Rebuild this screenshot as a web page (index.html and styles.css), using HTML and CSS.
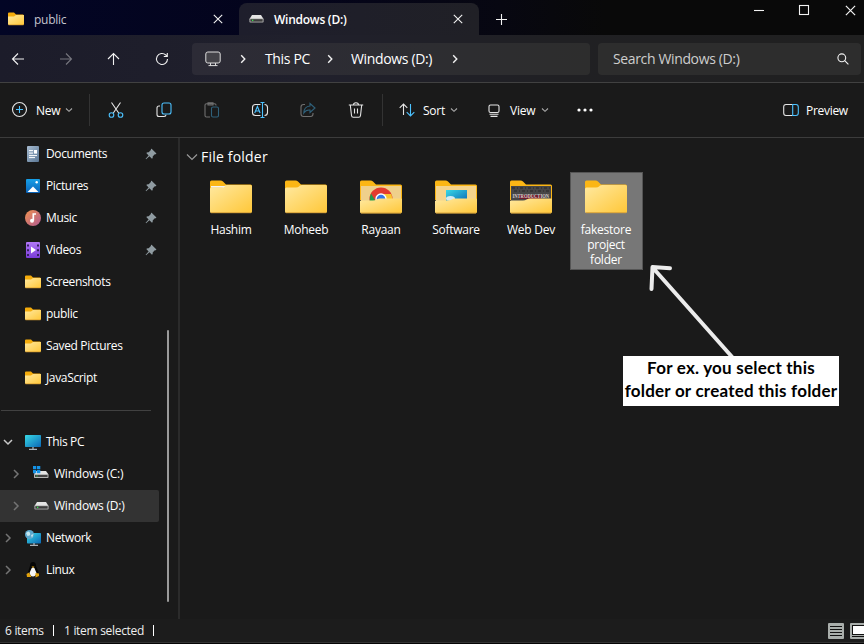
FILE: index.html
```html
<!DOCTYPE html>
<html lang="en">
<head>
<meta charset="utf-8">
<title>Windows (D:)</title>
<link rel="stylesheet" href="styles.css">
</head>
<body>
<svg class="defs" width="0" height="0" aria-hidden="true">
  <defs>
    <linearGradient id="gold" x1="0" y1="0" x2="1" y2="1"><stop offset="0" stop-color="#ffe9a0"/><stop offset="1" stop-color="#ffc738"/></linearGradient>
    <linearGradient id="screen" x1="0" y1="0" x2="1" y2="1"><stop offset="0" stop-color="#38d9e6"/><stop offset="1" stop-color="#0b67b5"/></linearGradient>
    <linearGradient id="paper" x1="0" y1="0" x2="1" y2="1"><stop offset="0" stop-color="#a8bdd2"/><stop offset="1" stop-color="#5a7694"/></linearGradient>
    <linearGradient id="photo" x1="0" y1="0" x2="0" y2="1"><stop offset="0" stop-color="#16a0e8"/><stop offset="1" stop-color="#0a62b8"/></linearGradient>
    <linearGradient id="tune" x1="0" y1="0" x2="1" y2="1"><stop offset="0" stop-color="#f0924f"/><stop offset="1" stop-color="#b05a92"/></linearGradient>
    <linearGradient id="film" x1="0" y1="0" x2="0" y2="1"><stop offset="0" stop-color="#b278f8"/><stop offset="1" stop-color="#7a3bd8"/></linearGradient>
    <symbol id="folder-s" viewBox="0 0 16 14"><path d="M0 1.500Q0 .5 1 .5H6L8 2.500H15.300V8H0Z" fill="#f5ac0b"/><path d="M0 4.500H6L8 3H16V12Q16 13 15 13H1Q0 13 0 12Z" fill="url(#gold)"/><path d="M.5 12.800H15.500" stroke="#dca031" stroke-width=".8"/></symbol>
    <symbol id="drive" viewBox="0 0 15 10"><path d="M3 1H12L14.500 5H.5Z" fill="#e4e4e4"/><rect x=".4" y="4.400" width="14.200" height="4.200" rx=".8" fill="#a9a9a9"/><rect x="1.400" y="5.200" width="12.200" height="2.400" fill="#3d3d3d"/><rect x="3" y="5.700" width="1.300" height="1.300" fill="#37e04c"/></symbol>
    <symbol id="close" viewBox="0 0 10 10"><path d="M.8.8 9.200 9.200M9.200.8.8 9.200" /></symbol>
    <symbol id="right" viewBox="0 0 6 10"><path d="M1.200 1.300 4.800 5 1.200 8.700"/></symbol>
    <symbol id="down" viewBox="0 0 8 6"><path d="M1 1.500 4 4.300 7 1.500"/></symbol>
    <symbol id="pin" viewBox="0 0 12 12"><path d="M6.600.8 11.200 5.200Q11.600 6 10.600 6.200L9.800 6.200 7.700 8.400Q8 10 7 10.800L4.400 8.300 1.100 11.200.6 10.800 3.600 7.500 1.300 5Q2 4 3.700 4.300L5.900 2.100V1.300Q6 .5 6.600.8Z" fill="#8f9ba1"/></symbol>
    <symbol id="folder-l" viewBox="0 0 42 34"><path d="M0 2Q0 .5 1.500 .5H10.500Q12 .5 13 1.500L16 4.500H40.500Q42 4.500 42 6V20H0Z" fill="#fbb615"/></symbol>
    <symbol id="front-l" viewBox="0 0 42 34"><path d="M0 9Q0 7.500 1.500 7.500H11Q13 7.500 14 6.500L15 5.500Q16 5 17 5H40.500Q42 5 42 6.500V31.500Q42 33 40.500 33H1.500Q0 33 0 31.500Z" fill="url(#gold)"/><path d="M1 32.700H41" stroke="#d8a23a"/></symbol>
    <symbol id="pocket-l" viewBox="0 0 42 34"><path d="M0 21Q0 20.500 1 20.500H13Q15 20.500 17 19.300Q18 18.500 20 18.500H41Q42 18.500 42 19.500V31.800Q42 33.300 40.500 33.300H1.500Q0 33.300 0 31.800Z" fill="url(#gold)"/><path d="M1 33H41" stroke="#d8a23a"/></symbol>
  </defs>
</svg>
<div class="window">
  <header class="chrome">
    <div class="tabs">
      <div class="tab first"><svg class="tab-folder"><use href="#folder-s"/></svg><span class="tab-title">public</span><svg class="line x"><use href="#close"/></svg></div>
      <div class="tab active"><svg class="tab-drive"><use href="#drive"/></svg><span class="tab-title">Windows (D:)</span><svg class="line x"><use href="#close"/></svg></div>
      <svg class="line plus" viewBox="0 0 11 11"><path d="M5.500 0V11M0 5.500H11"/></svg>
      <div class="controls">
        <svg class="line" viewBox="0 0 11 11"><path d="M1 5.500H11"/></svg>
        <svg class="line" viewBox="0 0 11 11"><rect x=".5" y=".5" width="9" height="9"/></svg>
        <svg class="line"><use href="#close"/></svg>
      </div>
    </div>
    <div class="nav">
      <div class="arrows">
        <svg class="line" viewBox="0 0 14 14"><path d="M13 7H1.500M7 1.500 1.500 7 7 12.500"/></svg>
        <svg class="line off" viewBox="0 0 14 14"><path d="M1 7H12.500M7 1.500 12.500 7 7 12.500"/></svg>
        <svg class="line" viewBox="0 0 14 14"><path d="M6.500 13V1.500M1 7 6.500 1.500 12 7"/></svg>
        <svg class="line" viewBox="0 0 14 14"><path d="M12.500 7A5.500 5.500 0 1 1 10.800 3L12 4.300M12.300 1V4.500H8.800"/></svg>
      </div>
      <div class="address">
        <svg class="pc" viewBox="0 0 16 16"><rect x=".8" y="1" width="14.400" height="11" rx="2" fill="#444349"/><path d="M5.500 12V14.500M10.500 12V14.500M3.500 14.600H12.500"/></svg>
        <svg class="line chev"><use href="#right"/></svg>
        <span class="crumb c1">This PC</span>
        <svg class="line chev"><use href="#right"/></svg>
        <span class="crumb c2">Windows (D:)</span>
        <svg class="line chev"><use href="#right"/></svg>
      </div>
      <div class="search"><span>Search Windows (D:)</span><svg class="line" viewBox="0 0 12 12"><circle cx="4.800" cy="4.800" r="3.900"/><path d="M7.700 7.700 11.400 11.400"/></svg></div>
    </div>
  </header>
  <div class="toolbar">
    <div class="tool new"><svg class="i16" viewBox="0 0 16 16"><circle cx="8.500" cy="7.500" r="7"/><path class="blue" d="M8.500 4V11M5 7.500H12"/></svg><span>New</span><svg class="small"><use href="#down"/></svg></div>
    <div class="icons">
      <svg class="i16" viewBox="0 0 16 16"><path d="M3.500.5 10.700 11M12.500.5 5.300 11"/><g class="blue"><circle cx="3.500" cy="13" r="2.300"/><circle cx="12.500" cy="13" r="2.300"/></g></svg>
      <svg class="i16" viewBox="0 0 16 16"><path d="M4 4H3Q1 4 1 6V12.500Q1 14.500 3 14.500H8Q10 14.500 10 12.800"/><rect class="blue" x="6" y="1" width="9" height="11" rx="2"/></svg>
      <svg class="i16 off" viewBox="0 0 16 16"><path d="M6 15H2.500Q1 15 1 13.500V3Q1 1.700 2.500 1.700H10.500Q12 1.700 12 3V3.500M4 .7H9V3H4Z"/><rect class="blue" x="7.500" y="5" width="7" height="10" rx="1.500"/></svg>
      <svg class="i17" viewBox="0 0 17 16"><path d="M8.500 2.500H3.500Q.5 2.500.5 5.500V10.500Q.5 13.500 3.500 13.500H8.500M12.500 2.500Q15.500 2.500 15.500 5.500V10.500Q15.500 13.500 12.500 13.500"/><path class="blue" d="M10.500.5V15.500M8.500.5H12.500M8.500 15.500H12.500M2.700 11 5.400 4.500 8.100 11M3.500 9H7.200"/></svg>
      <svg class="i16 off" viewBox="0 0 16 16"><path d="M5 2.500H3.500Q1 2.500 1 5V12Q1 14.500 3.500 14.500H10.500Q13 14.500 13 12V11"/><path class="blue" d="M10 1.500 15 6 10 10.500V8Q6 7.500 3.800 11Q4 4.500 10 4Z"/></svg>
      <svg class="i16" viewBox="0 0 16 16"><path d="M.8 3H15.200M5.500 3Q5.500.7 8 .7T10.500 3M2.300 3 3.500 13.500Q3.700 15.200 5.300 15.200H10.700Q12.300 15.200 12.500 13.500L13.700 3M6.500 6.500V11.500M9.500 6.500V11.500"/></svg>
    </div>
    <div class="tool sort"><svg class="i16" viewBox="0 0 16 16"><path d="M4.500 13V2M.7 5.800 4.500 2 8.300 5.800"/><path class="blue" d="M11.500 2V14M7.700 10.200 11.500 14 15.300 10.200"/></svg><span>Sort</span><svg class="small"><use href="#down"/></svg></div>
    <div class="tool view"><svg class="i12" viewBox="0 0 12 13"><rect x="1" y="1" width="10" height="7.500" rx="1.500"/><path d="M1.500 10.300H10.500M2.500 12.400H9.500"/></svg><span>View</span><svg class="small"><use href="#down"/></svg></div>
    <svg class="dots" viewBox="0 0 18 4"><circle cx="3" cy="2" r="1.600"/><circle cx="9" cy="2" r="1.600"/><circle cx="15" cy="2" r="1.600"/></svg>
    <div class="tool preview"><svg class="i16" viewBox="0 0 16 14"><path d="M9.500 1.500H3Q.7 1.500.7 4V10Q.7 12.500 3 12.500H9.500"/><path class="blue" d="M9.700 1.500V12.500H13Q15.300 12.500 15.300 10V4Q15.300 1.500 13 1.500Z"/></svg><span>Preview</span></div>
  </div>
  <main>
    <aside>
      <ul>
        <li><svg class="ico" viewBox="0 0 16 16"><rect x="2" y="0" width="12" height="16" rx="1" fill="url(#paper)"/><path d="M4 4.600H8M4 7.100H8M4 9.600H12M4 11.600H10" stroke="#fff"/><rect x="9" y="4" width="3" height="3.600" fill="#fff"/></svg><span>Documents</span><svg class="pin"><use href="#pin"/></svg></li>
        <li><svg class="ico" viewBox="0 0 16 16"><rect x="1" y="1" width="14" height="14" rx="1" fill="url(#photo)"/><path d="M2.500 14 8 8.500 13.500 14Z" fill="#fff"/><circle cx="11.700" cy="4.300" r="1.200" fill="#fff"/></svg><span>Pictures</span><svg class="pin"><use href="#pin"/></svg></li>
        <li><svg class="ico" viewBox="0 0 16 16"><circle cx="8" cy="8" r="8" fill="url(#tune)"/><circle cx="7" cy="10.700" r="2" fill="#fff"/><path d="M8.300 10.500V4H11" fill="none" stroke="#fff" stroke-width="1.700"/></svg><span>Music</span><svg class="pin"><use href="#pin"/></svg></li>
        <li><svg class="ico" viewBox="0 0 16 16"><rect x="1" y="0" width="14" height="16" rx="1" fill="url(#film)"/><path d="M3 2.500V14M13 2.500V14" stroke="#34215d" stroke-width="2" stroke-dasharray="2 2.700"/><path d="M6 4.500 11 8 6 11.500Z" fill="#fff"/></svg><span>Videos</span><svg class="pin"><use href="#pin"/></svg></li>
        <li><svg class="fold"><use href="#folder-s"/></svg><span>Screenshots</span></li>
        <li><svg class="fold"><use href="#folder-s"/></svg><span>public</span></li>
        <li><svg class="fold"><use href="#folder-s"/></svg><span>Saved Pictures</span></li>
        <li><svg class="fold"><use href="#folder-s"/></svg><span>JavaScript</span></li>
      </ul>
      <hr>
      <ul class="tree">
        <li><svg class="twist open" viewBox="0 0 10 10"><path d="M1 3 5 7 9 3"/></svg><svg class="ico" viewBox="0 0 16 16"><rect x="0" y="1" width="16" height="12" rx=".7" fill="url(#screen)"/><path d="M8 13V15M4 15.300H12" stroke="#a9b1b8" stroke-width="1.300"/></svg><span>This PC</span></li>
        <li class="child"><svg class="twist" viewBox="0 0 10 10"><path d="M3 1 7 5 3 9"/></svg><svg class="ico" viewBox="0 0 16 16"><path d="M3 5H13L15.500 8.500H.8Z" fill="#e4e4e4"/><rect x="1" y="8" width="14.500" height="4" rx=".7" fill="#b4b4b4"/><rect x="2" y="9" width="12.500" height="2" fill="#444"/><path d="M4 9.500V10.500" stroke="#37e04c"/><path d="M0 0H3.300V3.300H0ZM4 0H7.300V3.300H4ZM0 4H3.300V7.300H0ZM4 4H7.300V7.300H4Z" fill="#1492e6"/></svg><span>Windows (C:)</span></li>
        <li class="child selected"><svg class="twist" viewBox="0 0 10 10"><path d="M3 1 7 5 3 9"/></svg><svg class="disk"><use href="#drive"/></svg><span>Windows (D:)</span></li>
        <li><svg class="twist" viewBox="0 0 10 10"><path d="M3 1 7 5 3 9"/></svg><svg class="ico" viewBox="0 0 16 16"><rect x="2" y="3" width="14" height="10.500" rx=".7" fill="url(#screen)"/><path d="M9 13V15M5 15.300H13" stroke="#a9b1b8" stroke-width="1.300"/><circle cx="4.500" cy="4.500" r="4.500" fill="#5ba6cb"/><path d="M1 3Q4 0 5 3T2.500 6ZM6 5 8.500 4 7 8Z" fill="#c3e6ef"/></svg><span>Network</span></li>
        <li><svg class="twist" viewBox="0 0 10 10"><path d="M3 1 7 5 3 9"/></svg><svg class="ico" viewBox="0 0 16 16"><path d="M8 0Q11 0 11 4L13.500 10V14H3V10L5 4Q5 0 8 0Z" fill="#050505"/><path d="M8 5.500Q9.500 5 10 7.500L11.500 11Q10.500 14.500 8 14.500T4.500 11L6 7.500Q6.500 5.500 8 5.500Z" fill="#f4f4f4"/><path d="M6.500 4.500H9.500L8 6ZM1.500 12 4 10.500 6.500 15 2 15ZM10.500 11 14 11.500V14L10.500 15.500Z" fill="#e2a20c"/></svg><span>Linux</span></li>
      </ul>
      <div class="scroll"></div>
    </aside>
    <section class="files">
      <h2><svg viewBox="0 0 12 8"><path d="M1 1.500 6 6.500 11 1.500"/></svg><span>File folder</span></h2>
      <div class="grid">
        <div class="file"><svg viewBox="0 0 42 34"><use href="#folder-l"/><use href="#front-l"/><path d="M1 7.500V6H15.500L13.500 7.500Z" fill="#f4f4f4"/></svg><span>Hashim</span></div>
        <div class="file"><svg viewBox="0 0 42 34"><use href="#folder-l"/><use href="#front-l"/></svg><span>Moheeb</span></div>
        <div class="file"><svg viewBox="0 0 42 34"><use href="#folder-l"/><rect x="1" y="6" width="40" height="17" fill="#efd08b"/><circle cx="21" cy="19" r="11.500" fill="#e33b2e"/><path d="M21 19H32.500L30 27H21ZM24 14H31.300L32.500 19H24Z" fill="#fbc52c"/><path d="M11 13.500 21 30H13Q7.500 21 11 13.500Z" fill="#249b4b"/><circle cx="21" cy="19" r="5.700" fill="#fff"/><circle cx="21" cy="19" r="4.300" fill="#3578e5"/><use href="#pocket-l"/></svg><span>Rayaan</span></div>
        <div class="file"><svg viewBox="0 0 42 34"><use href="#folder-l"/><rect x="1" y="6" width="40" height="17" fill="#f5d48c"/><rect x="11" y="10" width="21" height="12" fill="url(#screen)"/><ellipse cx="15.500" cy="18.500" rx="4.500" ry="2.500" fill="#d6eaf0"/><use href="#pocket-l"/></svg><span>Software</span></div>
        <div class="file"><svg viewBox="0 0 42 34"><use href="#folder-l"/><rect x="1" y="6" width="40" height="17" fill="#474747"/><path d="M2 8H40M4 11H40" stroke="#292929" stroke-dasharray="3 2 1 2"/><path d="M9 15H31V19H9Z" fill="#711b2b"/><use href="#pocket-l"/><text class="intro" x="2.500" y="17.800" textLength="36.500" lengthAdjust="spacingAndGlyphs">INTRODUCTION</text></svg><span>Web Dev</span></div>
        <div class="file picked"><svg viewBox="0 0 42 34"><use href="#folder-l"/><use href="#front-l"/></svg><span>fakestore project folder</span></div>
      </div>
      <svg class="pointer" viewBox="0 0 90 96"><path d="M4.500 5.500 84 95M2.500 26 3.500 4 21 5.200"/></svg>
      <p class="note"><span class="n1">For ex. you select this</span><br><span class="n2">folder or created this folder</span></p>
    </section>
  </main>
  <footer>
    <span class="count">6 items</span><i></i><span class="chosen">1 item selected</span><i></i>
    <div class="modes">
      <svg viewBox="0 0 16 16"><rect width="16" height="16" rx="1" fill="#a9aeab"/><path d="M2 3.500H14M2 6.500H14M2 9.500H14M2 12.500H14" stroke="#111"/></svg>
      <svg viewBox="0 0 16 16"><rect width="16" height="16" rx="1" fill="#a9aeab"/><rect x="2.500" y="2.500" width="12" height="9" fill="#fff" stroke="#111"/><path d="M2 13.500H15" stroke="#111"/></svg>
    </div>
  </footer>
</div>
</body>
</html>
```
FILE: styles.css
```css
* { box-sizing: border-box; }
body { margin: 0; background: #1a1a1a; color: #fff; font: 12px/16px "Open Sans", "Noto Sans", sans-serif; letter-spacing: -.25px; }
.defs { position: absolute; }
svg { display: block; flex: none; fill: none; overflow: visible; }
span { white-space: nowrap; }
.window { width: 864px; height: 644px; overflow: hidden; display: flex; flex-direction: column; border-bottom: 1px solid #050505; }
.chrome { height: 83px; border-bottom: 1px solid #414141; background: linear-gradient(90deg, #1c1c2a, #20202c 35%, #202023 65%, #202020); }
.tabs { height: 35px; display: flex; background: linear-gradient(90deg, #020525, #04041b 35%, #070711 58%, #090909 70%); }
.line { stroke: #f2f2f2; stroke-width: 1.1; width: 14px; height: 14px; }
.off { opacity: .42; }
.tab { width: 240px; height: 32px; margin-top: 3px; display: flex; align-items: center; padding: 0 16px 0 10px; }
.first { width: 239px; padding-left: 8px; }
.active { border-radius: 8px 8px 0 0; background: linear-gradient(90deg, #1e1e2c, #202026); font-weight: 600; }
.tab-folder { width: 16px; height: 14px; margin-right: 10px; }
.tab-drive { width: 15px; height: 10px; margin-right: 10px; }
.first .tab-title { color: #c4c4ce; letter-spacing: -.25px; }
.active .tab-title { letter-spacing: -.25px; }
.tab-title { flex: 1; padding-top: 2px; }
.line.x { width: 10px; height: 10px; }
.plus { width: 11px; height: 11px; margin: 14px 0 0 17px; }
.controls { margin-left: auto; display: flex; gap: 35px; padding: 5px 8px 0 0; }
.controls svg { width: 11px; height: 11px; }
.nav { height: 47px; display: flex; align-items: center; gap: 8px; padding: 1px 3px 0 11px; }
.arrows { width: 173px; display: flex; gap: 34px; }
.address { width: 398px; height: 32px; border-radius: 4px; display: flex; align-items: center; padding-left: 13px; background: linear-gradient(90deg, #2c2b36, #2d2d31 60%, #2d2d2d); font-size: 14px; }
.pc { width: 16px; height: 16px; stroke: #ddd; }
.chev { width: 6px; height: 10px; stroke-width: 1.4; }
.pc + .chev { margin-left: 19px; }
.crumb { margin: 0 18px; letter-spacing: -.35px; }
.c1 { width: 46px; margin-left: 19px; margin-right: 16px; }
.c2 { width: 83px; }
.search { width: 263px; height: 32px; border-radius: 4px; background: #2d2d2d; color: #cecece; display: flex; align-items: center; justify-content: space-between; padding: 0 12px 0 15px; font-size: 14px; letter-spacing: -.36px; }
.search svg { width: 12px; height: 12px; }
.toolbar { height: 55px; border-bottom: 1px solid #3c3c3c; display: flex; align-items: center; background: #1a1a1a; }
.toolbar svg { stroke: #e5e5e5; stroke-width: 1.1; }
.toolbar .blue { stroke: #4cc2ff; }
.tool { display: flex; align-items: center; }
.tool span { padding-top: 2px; }
.new { width: 90px; height: 32px; border-right: 1px solid #333; padding-left: 11px; }
.new span { width: 25px; margin-left: 9px; letter-spacing: -.25px; }
.i16 { width: 16px; height: 16px; }
.i17 { width: 17px; height: 16px; }
.icons { width: 293px; height: 32px; border-right: 1px solid #333; padding-left: 18px; display: flex; align-items: center; gap: 32px; }
.icons .i17 { margin-right: -1px; }
.small { width: 8px; height: 6px; }
.toolbar .small { stroke: #a9a9a9; }
.sort { margin-left: 16px; }
.sort span { width: 24px; margin: 0 3px 0 8px; }
.new .small { margin-left: 4px; }
.sort .small { margin-left: 0; }
.view { margin-left: 30px; }
.i12 { width: 12px; height: 13px; }
.view span { width: 26px; margin: 0 5px 0 10px; }
.toolbar .dots { width: 18px; height: 4px; margin-left: 27px; fill: #fff; stroke: none; }
.preview { margin: 0 16px 0 auto; }
.preview span { margin-left: 7px; width: 42px; letter-spacing: -.3px; }
main { height: 481px; display: flex; }
aside { width: 180px; position: relative; border-right: 2px solid #2b2b2b; }
ul { margin: 0; padding: 0; list-style: none; }
li { height: 32px; width: 159px; display: flex; align-items: center; padding: 0 2px 0 25px; }
li span { margin-left: 5px; flex: 1; letter-spacing: -.35px; }
.child span { letter-spacing: -.22px; }
.ico { width: 16px; height: 16px; }
.fold { width: 16px; height: 14px; }
.disk { width: 15px; height: 10px; margin-left: 1px; }
.pin { width: 12px; height: 12px; }
hr { width: 150px; height: 1px; margin: 16px 0 15px 1px; border: 0; background: #414141; }
.tree li { padding-left: 3px; }
.tree .child { padding-left: 11px; }
.twist { width: 10px; height: 10px; margin-right: 12px; stroke: #747474; stroke-width: 1.5; }
.open { stroke: #c9c9c9; }
.selected { background: #333; border-radius: 0 2px 2px 0; }
.scroll { position: absolute; left: 167px; top: 192px; width: 2px; height: 272px; background: #9a9a9a; border-radius: 1px; }
.files { flex: 1; position: relative; padding: 10px 0 0 6px; }
h2 { margin: 0; height: 18px; display: flex; align-items: center; gap: 3px; font-size: 14px; font-weight: 400; letter-spacing: .2px; }
h2 svg { width: 12px; height: 8px; stroke: #999; stroke-width: 1.2; }
.grid { display: flex; gap: 2px; padding: 6px 0 0 8.5px; }
.file { width: 73px; height: 98px; padding: 7px 5px 0; text-align: center; line-height: 15px; display: flex; flex-direction: column; align-items: center; border: 1px solid transparent; }
.file svg { width: 42px; height: 34px; margin-bottom: 8px; }
.file span { white-space: normal; letter-spacing: -.25px; }
.picked { background: #777; border-color: #555; }
.picked span { width: 52px; }
.intro { font: bold 5.5px "Liberation Serif", serif; fill: #d5cccc; letter-spacing: 0; }
.pointer { position: absolute; left: 469px; top: 125px; width: 90px; height: 96px; stroke: #ececec; stroke-width: 4; stroke-linecap: round; stroke-linejoin: round; }
.note { position: absolute; left: 443px; top: 218px; width: 216px; height: 50px; margin: 0; background: #fff; color: #000; text-align: center; font: bold 17px/23px Lato, sans-serif; letter-spacing: .22px; }
footer { height: 24px; display: flex; align-items: center; padding-left: 5px; background: #1c1c1c; border-bottom: 1px solid #333; letter-spacing: -.3px; color: #eee; }
footer i { width: 1px; height: 11px; background: #fff; }
.count { width: 48px; }
.chosen { width: 89px; margin-left: 10px; }
.modes { display: flex; gap: 6px; margin: 0 -2px 0 auto; }
.modes svg { width: 16px; height: 16px; }
```
